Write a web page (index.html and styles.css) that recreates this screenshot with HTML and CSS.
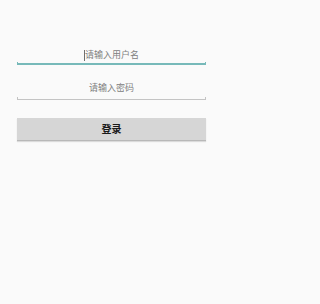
FILE: index.html
```html
<!DOCTYPE html>
<html>
<head>
<meta charset="utf-8">
<link rel="stylesheet" href="styles.css">
</head>
<body>
<div class="form">
  <div class="field focused">
    <div class="hint"><span class="cursor"></span>请输入用户名</div>
    <div class="line"></div>
  </div>
  <div class="field">
    <div class="hint">请输入密码</div>
    <div class="line"></div>
  </div>
  <div class="button">登录</div>
</div>
</body>
</html>
```
FILE: styles.css
```css
html, body {
  margin: 0;
  padding: 0;
  background: #fafafa;
  width: 221px;
  height: 304px;
  font-family: "Noto Sans CJK SC", "Noto Sans", sans-serif;
}
.form {
  display: flex;
  flex-direction: column;
  padding: 49px 15px 0 17px;
}
.field {
  display: flex;
  flex-direction: column;
}
.hint {
  height: 12px;
  line-height: 12px;
  font-size: 9px;
  color: #808080;
  text-align: center;
  display: flex;
  justify-content: center;
  align-items: center;
}
.cursor {
  width: 1px;
  height: 11px;
  background: #6f6f6f;
}
.line {
  position: relative;
  height: 1px;
  background: #c4c4c4;
  margin-top: 5px;
}
.line::before, .line::after {
  content: "";
  position: absolute;
  bottom: 0;
  width: 1px;
  height: 3px;
  background: #c4c4c4;
}
.line::before { left: 0; }
.line::after { right: 0; }
.focused .line {
  height: 2px;
  margin-top: 2px;
  background: #77b9b9;
}
.focused .line::before, .focused .line::after {
  background: #77b9b9;
}
.field + .field {
  margin-top: 17px;
}
.button {
  margin-top: 18px;
  height: 22px;
  line-height: 22px;
  background: #d6d6d6;
  border-bottom: 1px solid #b8b8b8;
  box-shadow: 0 1px 1px rgba(0,0,0,0.12);
  text-align: center;
  font-size: 10px;
  font-weight: bold;
  color: #1a1a1a;
}
```
